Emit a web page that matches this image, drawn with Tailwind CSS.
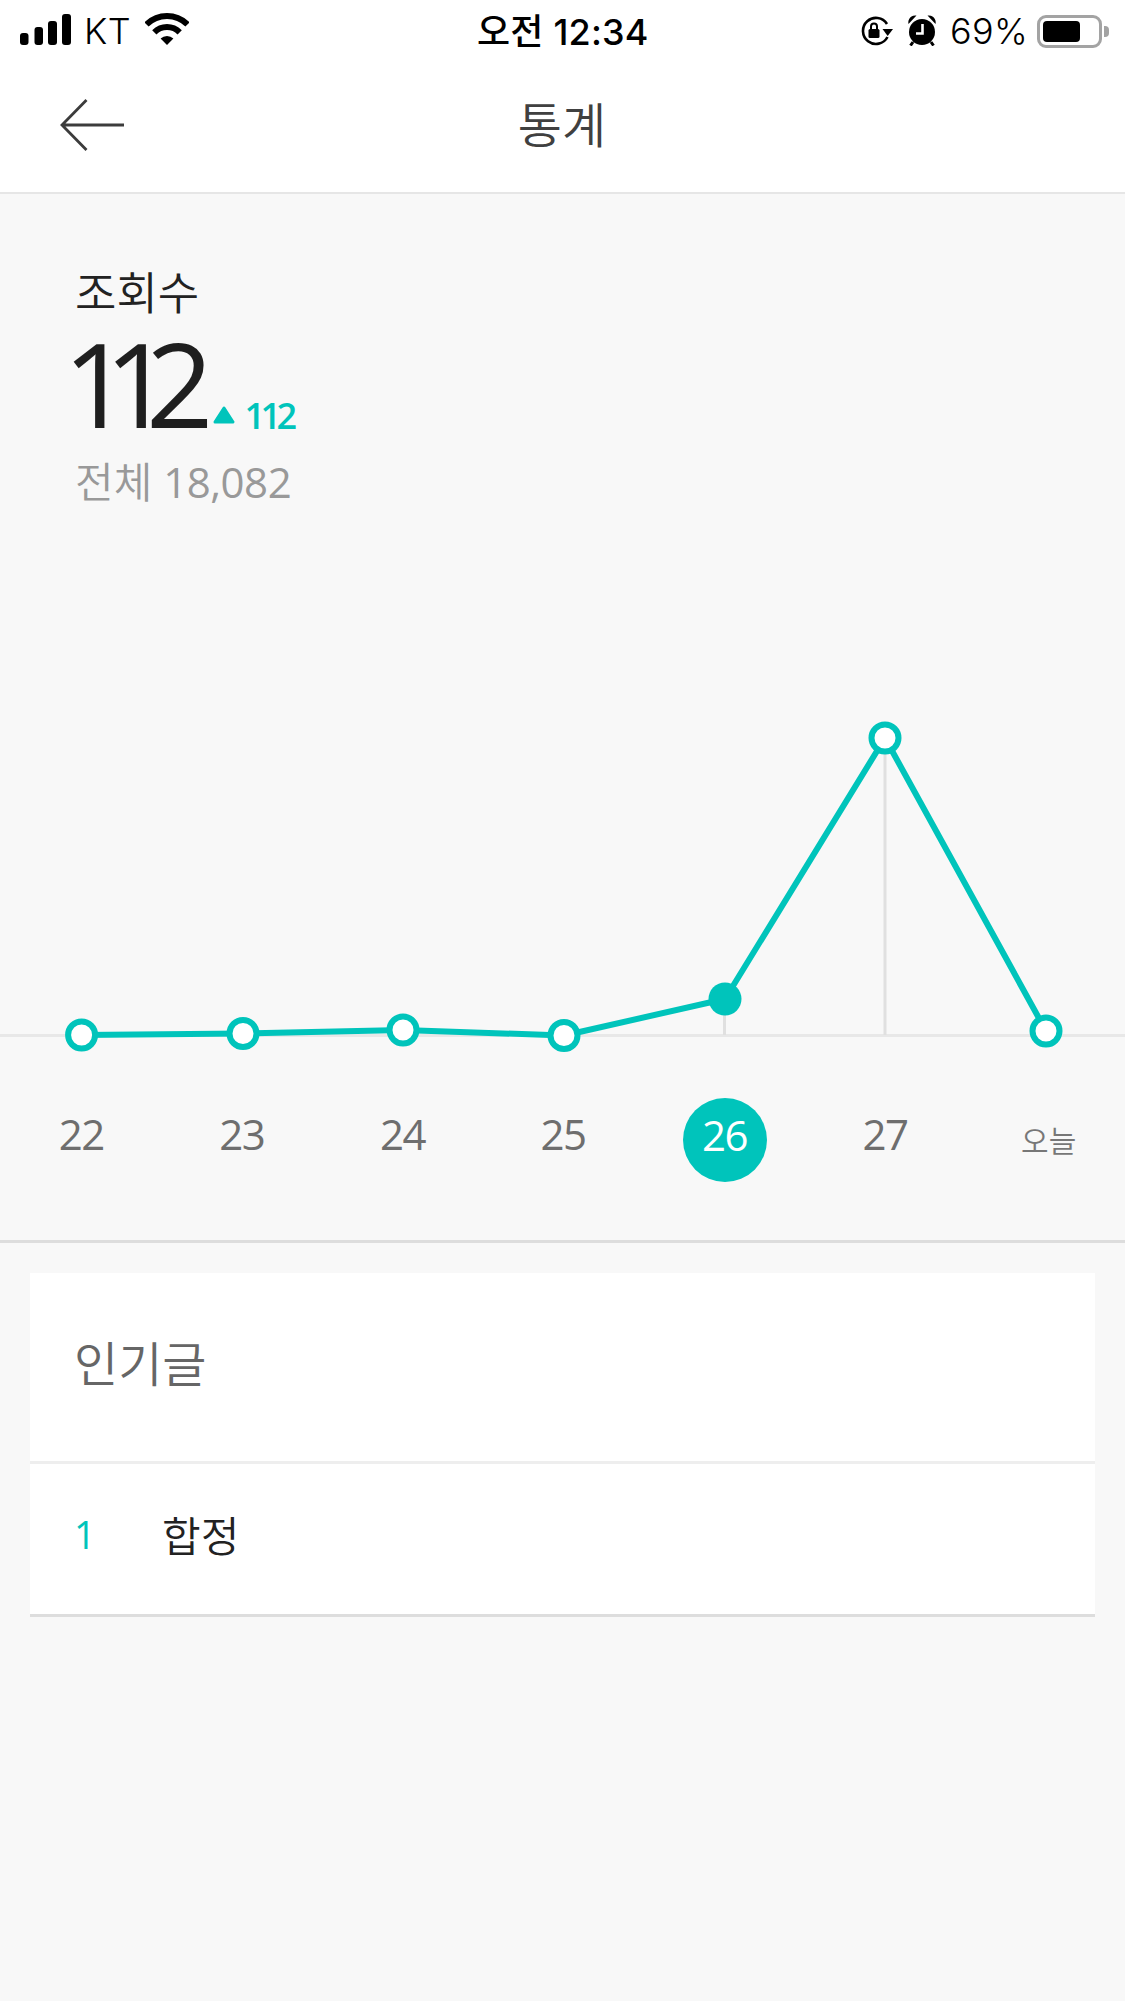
<!DOCTYPE html>
<html lang="ko">
  <head>
    <meta charset="UTF-8" />
    <meta name="viewport" content="width=device-width, initial-scale=1.0" />
    <title>통계</title>
    <script src="https://cdn.jsdelivr.net/npm/@tailwindcss/browser@4"></script>
  </head>
  <body class="bg-[#f8f8f8] font-['Noto_Sans_CJK_KR',sans-serif] w-[1125px] h-[2001px] overflow-hidden">
    <!-- status bar -->
    <div class="bg-white h-[62px] relative flex items-center justify-between text-black font-['Inter','Noto_Sans_CJK_KR',sans-serif]">
      <div class="flex items-center pl-[20px]">
        <svg width="51" height="31" viewBox="0 0 51 31" class="mt-[-3px]">
          <rect x="0" y="19" width="8.5" height="12" rx="3" fill="#000" />
          <rect x="14.5" y="13" width="8.5" height="18" rx="3" fill="#000" />
          <rect x="28" y="7" width="9" height="24" rx="3" fill="#000" />
          <rect x="42" y="0" width="9" height="31" rx="3" fill="#000" />
        </svg>
        <span class="text-[36px] leading-none ml-[13px] font-light tracking-[0.5px]">KT</span>
        <svg width="44" height="32" viewBox="143 13 44 32" class="ml-[14px] mt-[-4px]">
          <path d="M144.5 24.5A29 29 0 0 1 185.5 24.5" fill="none" stroke="#000" stroke-width="6" />
          <path d="M152.3 32.3A18 18 0 0 1 177.7 32.3" fill="none" stroke="#000" stroke-width="6" />
          <path d="M165 45L158.6 38.6A9 9 0 0 1 171.4 38.6Z" fill="#000" />
        </svg>
      </div>
      <div class="absolute left-[477px] top-[12px] text-[36px] leading-[40px] font-medium tracking-[0.2px]">오전 12:34</div>
      <div class="flex items-center pr-[16px]">
        <svg width="33" height="30" viewBox="0 0 33 30" class="mt-[-1px] ml-[-3px]">
          <path d="M27 8A13 13 0 1 0 27.5 21" fill="none" stroke="#000" stroke-width="2.6" />
          <path d="M22.5 13H33L27.7 20Z" fill="#000" />
          <rect x="8.5" y="13" width="11" height="9" rx="1.5" fill="#000" />
          <path d="M11 13V10.5A3 3 0 0 1 17 10.5V13" fill="none" stroke="#000" stroke-width="2" />
        </svg>
        <svg width="28" height="31" viewBox="0 0 28 31" class="ml-[15px] mt-[-1px]">
          <circle cx="14" cy="17" r="13" fill="#000" />
          <path d="M0.5 9A7 7 0 0 1 8.5 0.5Z M27.5 9A7 7 0 0 0 19.5 0.5Z" fill="#000" />
          <path d="M5 27L2.5 30.5M23 27L25.5 30.5" stroke="#000" stroke-width="3" />
          <path d="M14.5 9V18.5H8" fill="none" stroke="#fff" stroke-width="2.6" />
        </svg>
        <span class="text-[36px] leading-none font-light ml-[14px] tracking-[0.3px]">69%</span>
        <div class="ml-[9px] w-[65px] h-[33px] rounded-[9px] border-[3px] border-[#a3a3a3] p-[3px]">
          <div class="w-[37px] h-full bg-black rounded-[4px]"></div>
        </div>
        <div class="w-[5px] h-[11px] bg-[#a3a3a3] rounded-r-[4px] ml-[2px]"></div>
      </div>
    </div>

    <!-- header -->
    <header class="bg-white h-[132px] border-b-2 border-[#e6e6e6] relative flex items-center justify-center pb-[11px]">
      <svg width="66" height="52" viewBox="0 0 66 52" class="absolute left-[60px] top-[37px]">
        <path d="M26.5 1L2 26L26.5 51M2 26H64" fill="none" stroke="#3c3c3c" stroke-width="2.8" />
      </svg>
      <h1 class="text-[48px] leading-none font-[350] text-[#404040] ml-[-1px]">통계</h1>
    </header>

    <!-- summary -->
    <section class="pl-[75px] pt-[69px] h-[506px]">
      <div class="text-[45px] leading-[56px] text-[#222222] font-[350]">조회수</div>
      <div class="flex items-end h-[104px] mt-[12px]">
        <span class="text-[118px] leading-[104px] font-normal text-[#1f1f1f] tracking-[-26px] ml-[-12px] font-['Open_Sans',sans-serif]">112</span>
        <svg width="22" height="18" viewBox="0 0 22 18" class="ml-[26px] mb-[11px]">
          <path d="M11 2L20 16H2Z" fill="#00c4bb" stroke="#00c4bb" stroke-width="3" stroke-linejoin="round" />
        </svg>
        <span class="text-[36px] leading-[36px] font-semibold text-[#00c4bb] ml-[9px] mb-[1px] tracking-[-4.5px] font-['Open_Sans',sans-serif]">112</span>
      </div>
      <div class="text-[42px] leading-[50px] text-[#999999] font-[350] mt-[22px] font-['Open_Sans','Noto_Sans_CJK_KR',sans-serif]">전체 <span class="font-normal tracking-[-0.5px]">18,082</span></div>
    </section>

    <!-- chart -->
    <svg width="1125" height="360" viewBox="0 700 1125 360" class="block">
      <path d="M0 1035.5H1125" stroke="#e8e8e8" stroke-width="3" />
      <path d="M724.5 999V1035M885 738V1035" stroke="#e0e0e0" stroke-width="3" />
      <polyline points="81.6,1035 243,1033.5 403,1030 564,1035.5 725,999 885,738 1046,1031" fill="none" stroke="#00c4bb" stroke-width="6" stroke-linejoin="round" />
      <circle cx="81.6" cy="1035" r="13.5" fill="#fff" stroke="#00c4bb" stroke-width="6" />
      <circle cx="243" cy="1033.5" r="13.5" fill="#fff" stroke="#00c4bb" stroke-width="6" />
      <circle cx="403" cy="1030" r="13.5" fill="#fff" stroke="#00c4bb" stroke-width="6" />
      <circle cx="564" cy="1035.5" r="13.5" fill="#fff" stroke="#00c4bb" stroke-width="6" />
      <circle cx="725" cy="999" r="16.5" fill="#00c4bb" />
      <circle cx="885" cy="738" r="13.5" fill="#fff" stroke="#00c4bb" stroke-width="6" />
      <circle cx="1046" cy="1031" r="13.5" fill="#fff" stroke="#00c4bb" stroke-width="6" />
    </svg>

    <!-- day labels -->
    <div class="grid grid-cols-7 pl-[1px] h-[183px] border-b-[3px] border-[#dddddd] text-[#6e6e6e] font-['Open_Sans',sans-serif] font-normal text-[42px] tracking-[-1.5px]">
      <div class="flex justify-center pt-[45px] leading-[58px]">22</div>
      <div class="flex justify-center pt-[45px] leading-[58px]">23</div>
      <div class="flex justify-center pt-[45px] leading-[58px]">24</div>
      <div class="flex justify-center pt-[45px] leading-[58px]">25</div>
      <div class="flex justify-center pt-[38px] pl-[2px]">
        <div class="w-[84px] h-[84px] rounded-full bg-[#00c4bb] text-white flex items-center justify-center leading-none pb-[10px]">26</div>
      </div>
      <div class="flex justify-center pt-[45px] pl-[2px] leading-[58px]">27</div>
      <div class="flex justify-center pt-[50px] pl-[8px] leading-[58px] text-[30px] tracking-normal text-[#777777] font-[350] font-['Noto_Sans_CJK_KR',sans-serif]">오늘</div>
    </div>

    <!-- popular posts -->
    <section class="mx-[30px] mt-[30px] bg-white border-b-[3px] border-[#dddddd]">
      <div class="h-[191px] border-b-[3px] border-[#eeeeee] pl-[44px] flex items-center pb-[12px]">
        <h2 class="text-[48px] leading-none font-[350] text-[#666666]">인기글</h2>
      </div>
      <div class="h-[150px] pl-[44px] flex items-center pb-[10px]">
        <span class="w-[88px] text-[38px] leading-none font-normal text-[#00c4bb] font-['Open_Sans',sans-serif]">1</span>
        <span class="text-[42px] leading-none text-[#222222] font-[350]">합정</span>
      </div>
    </section>
  </body>
</html>
